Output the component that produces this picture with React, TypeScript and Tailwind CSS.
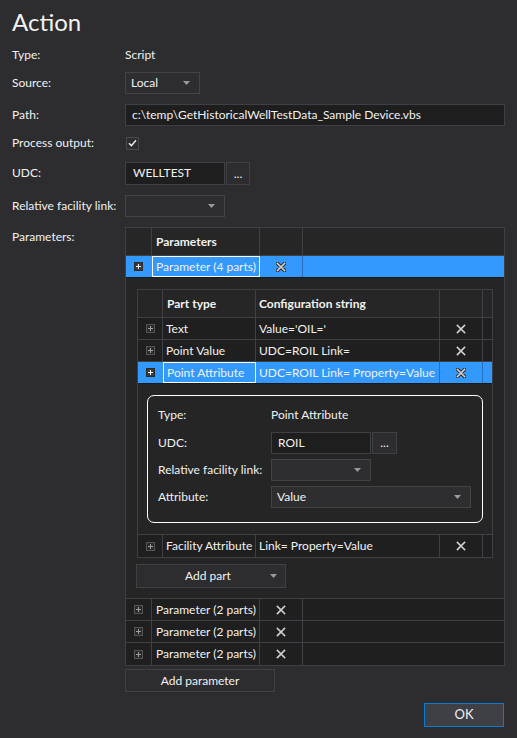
import React from "react";

const font = "font-['Lato','Liberation_Sans',sans-serif]";

const Caret = () => (
  <svg width="7" height="4" viewBox="0 0 7 4">
    <path d="M0 0h7L3.5 4z" fill="#9a9a9a" />
  </svg>
);

const Cross = ({ selected }: { selected?: boolean }) => (
  <svg width="10" height="10" viewBox="0 0 10 10">
    {selected && <path d="M1.5 1.5l7 7M8.5 1.5l-7 7" stroke="#2a2a2a" strokeWidth="3.6" strokeLinecap="round" />}
    <path d="M1.5 1.5l7 7M8.5 1.5l-7 7" stroke="#cfcfcf" strokeWidth="1.7" strokeLinecap="square" />
  </svg>
);

const Plus = ({ selected }: { selected?: boolean }) => (
  <div
    className={
      "w-[9px] h-[9px] border flex items-center justify-center " +
      (selected ? "bg-[#3a3a3a] border-[#2a2a2a]" : "border-[#555558] bg-[#2a2a2a]")
    }
  >
    <svg width="7" height="7" viewBox="0 0 7 7">
      <path d="M3.5 1v5M1 3.5h5" stroke={selected ? "#ffffff" : "#a0a0a0"} strokeWidth="1" />
    </svg>
  </div>
);

const Dropdown = ({ value, w }: { value?: string; w: string }) => (
  <div className={`${w} h-[22px] border border-[#434346] bg-[#2e2e31] flex items-center justify-between pl-[5px] pr-[9px]`}>
    <span>{value}</span>
    <Caret />
  </div>
);

const FormRow = ({ label, children, cls }: { label: string; children?: React.ReactNode; cls: string }) => (
  <div className={`flex items-center ${cls}`}>
    <div className="w-[113px] shrink-0">{label}</div>
    {children}
  </div>
);

export default function App() {
  const parts = [
    { type: "Text", conf: "Value='OIL='" },
    { type: "Point Value", conf: "UDC=ROIL Link=" },
    { type: "Point Attribute", conf: "UDC=ROIL Link= Property=Value", selected: true },
  ];

  return (
    <div className={`w-[517px] h-[738px] bg-[#2d2d30] text-[#f1f1f1] text-[12px] ${font} px-[12px] pt-[6px] relative`}>
      <div className="text-[24px] h-[32px] leading-[32px]">Action</div>

      <FormRow label="Type:" cls="h-[22px] mt-[6px]">
        <span>Script</span>
      </FormRow>
      <FormRow label="Source:" cls="h-[22px] mt-[6px]">
        <Dropdown value="Local" w="w-[75px]" />
      </FormRow>
      <FormRow label="Path:" cls="h-[22px] mt-[10px]">
        <div className="w-[380px] h-[22px] border border-[#3f3f46] bg-[#1e1e1e] flex items-center pl-[6px]">
          c:\temp\GetHistoricalWellTestData_Sample Device.vbs
        </div>
      </FormRow>
      <FormRow label="Process output:" cls="h-[22px] mt-[6px]">
        <div className="w-[13px] h-[13px] border border-[#4a4a4e] bg-[#2d2d30] flex items-center justify-center ml-[1px]">
          <svg width="9" height="8" viewBox="0 0 9 8">
            <path d="M1 4.2l2.4 2.4L8 1.3" stroke="#f1f1f1" strokeWidth="1.4" fill="none" />
          </svg>
        </div>
      </FormRow>
      <FormRow label="UDC:" cls="h-[22px] mt-[8px]">
        <div className="w-[100px] h-[23px] border border-[#3f3f46] bg-[#1e1e1e] flex items-center pl-[7px]">WELLTEST</div>
        <div className="w-[24px] h-[23px] ml-[1px] border border-[#3f3f46] bg-[#2d2d30] flex items-end justify-center pb-[4px] leading-none">...</div>
      </FormRow>
      <FormRow label="Relative facility link:" cls="h-[22px] mt-[11px]">
        <Dropdown w="w-[100px]" />
      </FormRow>

      <div className="flex mt-[10px]">
        <div className="w-[113px] shrink-0 h-[20px] leading-[20px]">Parameters:</div>
        <div className="w-[380px] border border-[#3f3f46] bg-[#1f1f1f]">
          {/* header */}
          <div className="flex h-[28px] border-b border-[#3f3f46] bg-[#262626] font-bold">
            <div className="w-[26px] border-r border-[#3f3f46]" />
            <div className="w-[108px] border-r border-[#3f3f46] pl-[4px] flex items-center">Parameters</div>
            <div className="w-[43px] border-r border-[#3f3f46]" />
            <div className="flex-1" />
          </div>
          {/* selected parameter */}
          <div className="flex h-[22px] border-b border-[#1a1a1a] bg-[#3399ff]">
            <div className="w-[26px] border-r border-[#3399ff] flex items-center justify-center">
              <Plus selected />
            </div>
            <div className="w-[108px] border border-white pl-[3px] flex items-center">Parameter (4 parts)</div>
            <div className="w-[43px] border-r border-[#2a6fc0] flex items-center justify-center">
              <Cross selected />
            </div>
            <div className="flex-1" />
          </div>

          {/* nested parts */}
          <div className="bg-[#252526] border-b border-[#3f3f46] pt-[11px] pb-[10px] px-[11px]">
            <div className="border border-[#3f3f46] bg-[#1f1f1f]">
              <div className="flex h-[28px] border-b border-[#3f3f46] bg-[#262626] font-bold">
                <div className="w-[25px] border-r border-[#3f3f46]" />
                <div className="w-[93px] border-r border-[#3f3f46] pl-[4px] flex items-center">Part type</div>
                <div className="w-[184px] border-r border-[#3f3f46] pl-[3px] flex items-center">Configuration string</div>
                <div className="w-[43px] border-r border-[#3f3f46]" />
                <div className="flex-1" />
              </div>
              {parts.map((p) => (
                <div
                  key={p.type}
                  className={"flex h-[22px] border-b " + (p.selected ? "bg-[#3399ff] border-[#1a1a1a]" : "border-[#3f3f46]")}
                >
                  <div className={"w-[25px] border-r flex items-center justify-center " + (p.selected ? "border-[#3399ff]" : "border-[#3f3f46]")}>
                    <Plus selected={p.selected} />
                  </div>
                  <div
                    className={
                      "w-[93px] pl-[3px] flex items-center " +
                      (p.selected ? "border border-white" : "border-r border-[#3f3f46]")
                    }
                  >
                    {p.type}
                  </div>
                  <div className={"w-[184px] border-r pl-[3px] flex items-center " + (p.selected ? "border-[#2a6fc0]" : "border-[#3f3f46]")}>
                    {p.conf}
                  </div>
                  <div className={"w-[43px] border-r flex items-center justify-center " + (p.selected ? "border-[#2a6fc0]" : "border-[#3f3f46]")}>
                    <Cross selected={p.selected} />
                  </div>
                  <div className="flex-1" />
                </div>
              ))}

              {/* details */}
              <div className="bg-[#252526] border-b border-[#3f3f46] pt-[11px] pb-[11px] px-[9px]">
                <div className="border-[1.5px] border-white rounded-[7px] pt-[8px] pb-[14px] px-[10px]">
                  <div className="flex items-center h-[22px]">
                    <div className="w-[113px] shrink-0">Type:</div>
                    <span>Point Attribute</span>
                  </div>
                  <div className="flex items-center h-[22px] mt-[6px]">
                    <div className="w-[113px] shrink-0">UDC:</div>
                    <div className="w-[100px] h-[22px] border border-[#3f3f46] bg-[#1e1e1e] flex items-center pl-[6px]">ROIL</div>
                    <div className="w-[25px] h-[22px] ml-[1px] border border-[#3f3f46] bg-[#2d2d30] flex items-end justify-center pb-[4px] leading-none">...</div>
                  </div>
                  <div className="flex items-center h-[22px] mt-[5px]">
                    <div className="w-[113px] shrink-0">Relative facility link:</div>
                    <Dropdown w="w-[100px]" />
                  </div>
                  <div className="flex items-center h-[22px] mt-[5px]">
                    <div className="w-[113px] shrink-0">Attribute:</div>
                    <Dropdown value="Value" w="w-[200px]" />
                  </div>
                </div>
              </div>

              <div className="flex h-[22px]">
                <div className="w-[25px] border-r border-[#3f3f46] flex items-center justify-center">
                  <Plus />
                </div>
                <div className="w-[93px] border-r border-[#3f3f46] pl-[3px] flex items-center whitespace-nowrap">Facility Attribute</div>
                <div className="w-[184px] border-r border-[#3f3f46] pl-[3px] flex items-center">Link= Property=Value</div>
                <div className="w-[43px] border-r border-[#3f3f46] flex items-center justify-center">
                  <Cross />
                </div>
                <div className="flex-1" />
              </div>
            </div>

            <div className="w-[150px] h-[24px] mt-[6px] -ml-[1px] border border-[#3f3f46] bg-[#2d2d30] flex items-center relative">
              <span className="flex-1 text-center pr-[6px]">Add part</span>
              <div className="absolute right-[8px] top-[9px]">
                <Caret />
              </div>
            </div>
          </div>

          {[0, 1, 2].map((i) => (
            <div key={i} className={"flex h-[22px] " + (i < 2 ? "border-b border-[#3f3f46]" : "")}>
              <div className="w-[26px] border-r border-[#3f3f46] flex items-center justify-center">
                <Plus />
              </div>
              <div className="w-[108px] border-r border-[#3f3f46] pl-[4px] flex items-center">Parameter (2 parts)</div>
              <div className="w-[43px] border-r border-[#3f3f46] flex items-center justify-center">
                <Cross />
              </div>
              <div className="flex-1" />
            </div>
          ))}
        </div>
      </div>

      <div className="ml-[113px] mt-[3px] w-[150px] h-[23px] border border-[#3f3f46] bg-[#2d2d30] flex items-center justify-center">
        Add parameter
      </div>

      <div className="flex justify-end mt-[11px] pr-[1px]">
        <div className="w-[80px] h-[24px] border border-[#0a7ad6] bg-[#3f3f46] flex items-center justify-center text-[13px]">OK</div>
      </div>
    </div>
  );
}
